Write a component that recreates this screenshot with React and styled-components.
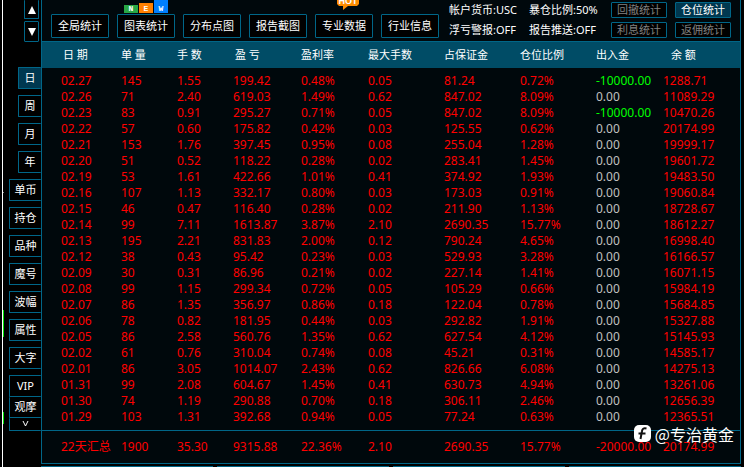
import { useState } from 'react'
import styled, { createGlobalStyle } from 'styled-components'

const columns = [
    { title: '日 期', width: 79, inset: 2 },
    { title: '单 量', width: 56 },
    { title: '手 数', width: 56 },
    { title: '盈 亏', width: 68, inset: 2 },
    { title: '盈利率', width: 67 },
    { title: '最大手数', width: 76 },
    { title: '占保证金', width: 76 },
    { title: '仓位比例', width: 76 },
    { title: '出入金', width: 67 },
    { title: '余 额', width: 77, inset: 8 },
]

const rows = [
    ['02.27', '145', '1.55', '199.42', '0.48%', '0.05', '81.24', '0.72%', '-10000.00', '1288.71'],
    ['02.26', '71', '2.40', '619.03', '1.49%', '0.62', '847.02', '8.09%', '0.00', '11089.29'],
    ['02.23', '83', '0.91', '295.27', '0.71%', '0.05', '847.02', '8.09%', '-10000.00', '10470.26'],
    ['02.22', '57', '0.60', '175.82', '0.42%', '0.03', '125.55', '0.62%', '0.00', '20174.99'],
    ['02.21', '153', '1.76', '397.45', '0.95%', '0.08', '255.04', '1.28%', '0.00', '19999.17'],
    ['02.20', '51', '0.52', '118.22', '0.28%', '0.02', '283.41', '1.45%', '0.00', '19601.72'],
    ['02.19', '53', '1.61', '422.66', '1.01%', '0.41', '374.92', '1.93%', '0.00', '19483.50'],
    ['02.16', '107', '1.13', '332.17', '0.80%', '0.03', '173.03', '0.91%', '0.00', '19060.84'],
    ['02.15', '46', '0.47', '116.40', '0.28%', '0.02', '211.90', '1.13%', '0.00', '18728.67'],
    ['02.14', '99', '7.11', '1613.87', '3.87%', '2.10', '2690.35', '15.77%', '0.00', '18612.27'],
    ['02.13', '195', '2.21', '831.83', '2.00%', '0.12', '790.24', '4.65%', '0.00', '16998.40'],
    ['02.12', '38', '0.43', '95.42', '0.23%', '0.03', '529.93', '3.28%', '0.00', '16166.57'],
    ['02.09', '30', '0.31', '86.96', '0.21%', '0.02', '227.14', '1.41%', '0.00', '16071.15'],
    ['02.08', '99', '1.15', '299.34', '0.72%', '0.05', '105.29', '0.66%', '0.00', '15984.19'],
    ['02.07', '86', '1.35', '356.97', '0.86%', '0.18', '122.04', '0.78%', '0.00', '15684.85'],
    ['02.06', '78', '0.82', '181.95', '0.44%', '0.03', '292.82', '1.91%', '0.00', '15327.88'],
    ['02.05', '86', '2.58', '560.76', '1.35%', '0.62', '627.54', '4.12%', '0.00', '15145.93'],
    ['02.02', '61', '0.76', '310.04', '0.74%', '0.08', '45.21', '0.31%', '0.00', '14585.17'],
    ['02.01', '86', '3.05', '1014.07', '2.43%', '0.62', '826.66', '6.08%', '0.00', '14275.13'],
    ['01.31', '99', '2.08', '604.67', '1.45%', '0.41', '630.73', '4.94%', '0.00', '13261.06'],
    ['01.30', '74', '1.19', '290.88', '0.70%', '0.18', '306.11', '2.46%', '0.00', '12656.39'],
    ['01.29', '103', '1.31', '392.68', '0.94%', '0.05', '77.24', '0.63%', '0.00', '12365.51'],
]

const total = ['22天汇总', '1900', '35.30', '9315.88', '22.36%', '2.10', '2690.35', '15.77%', '-20000.00', '20174.99']

const periods = ['日', '周', '月', '年']
const views = ['单币', '持仓', '品种', '魔号', '波幅', '属性', '大字']
const reports = ['全局统计', '图表统计', '分布点图', '报告截图', '专业数据', '行业信息']
const toggles = ['回撤统计', '仓位统计', '利息统计', '返佣统计']

function cashColor(column, value) {
    if (column !== 8) return '#ff0000'
    return value.startsWith('-') ? '#00ff00' : '#c0c0c0'
}

const App = () => {
    const [period, setPeriod] = useState('日')
    const [toggle, setToggle] = useState('仓位统计')

    return (
        <>
            <GlobalStyle />
            <Page>
                <Sidebar>
                    <ChartEdge width="5" height="467" viewBox="0 0 5 467" aria-hidden="true">
                        <rect x="2" width="1" height="467" fill="#fff" />
                        <rect x="3" y="192" width="1" height="1" fill="#888" />
                        <rect x="3" y="310" width="1" height="27" fill="#00e000" />
                        <rect x="3" y="412" width="1" height="12" fill="#00e000" />
                    </ChartEdge>
                    <Arrows>
                        <ArrowButton aria-label="向上">
                            <svg width="8" height="9" viewBox="0 0 8 9"><path d="M4 1 8 9H0z" fill="#fff" /></svg>
                        </ArrowButton>
                        <ArrowButton aria-label="向下">
                            <svg width="8" height="8" viewBox="0 0 8 8"><path d="M0 0h8L4 8z" fill="#fff" /></svg>
                        </ArrowButton>
                    </Arrows>
                    <Tabs>
                        {periods.map(name => (
                            <Tab key={name} $narrow $active={name === period} onClick={() => setPeriod(name)}>{name}</Tab>
                        ))}
                        {views.map(name => <Tab key={name}>{name}</Tab>)}
                        <TabStack>
                            <Tab>VIP</Tab>
                            <Tab>观摩</Tab>
                            <MoreTab aria-label="更多">
                                <svg width="7" height="6" viewBox="0 0 7 6"><path d="M1 0 3.5 5 6 0" fill="none" stroke="#fff" /></svg>
                            </MoreTab>
                        </TabStack>
                    </Tabs>
                </Sidebar>

                <Main>
                    <Panel>
                        <Toolbar>
                            <Reports>
                                {reports.map(name => (
                                    <ReportItem key={name}>
                                        <ReportButton>{name}</ReportButton>
                                        {name === '图表统计' && (
                                            <NewBadge>
                                                <NewLetter $color="#28a745" $height={8}>N</NewLetter>
                                                <NewLetter $color="#ff8000" $height={10}>E</NewLetter>
                                                <NewLetter $color="#007fff" $height={13}>W</NewLetter>
                                            </NewBadge>
                                        )}
                                        {name === '专业数据' && (
                                            <HotBadge width="22" height="10" viewBox="0 0 22 10">
                                                <path d="M0 0h22v4l-2 2h-9l-5 4V6H2L0 4z" fill="#ff8c00" />
                                                <text x="11" y="4" textAnchor="middle" fill="#fff">HOT</text>
                                            </HotBadge>
                                        )}
                                    </ReportItem>
                                ))}
                            </Reports>
                            <Status>
                                <span>帐户货币:USC</span>
                                <span>暴仓比例:50%</span>
                                <span>浮亏警报:OFF</span>
                                <span>报告推送:OFF</span>
                            </Status>
                            <Toggles>
                                {toggles.map(name => (
                                    <ToggleButton key={name} $active={name === toggle} onClick={() => setToggle(name)}>{name}</ToggleButton>
                                ))}
                            </Toggles>
                        </Toolbar>

                        <Table>
                            <colgroup>
                                {columns.map(column => <Col key={column.title} $width={column.width} />)}
                            </colgroup>
                            <thead>
                                <tr>
                                    {columns.map(column => (
                                        <Th key={column.title} scope="col"><Title $inset={column.inset}>{column.title}</Title></Th>
                                    ))}
                                </tr>
                            </thead>
                            <tbody>
                                {rows.map(row => (
                                    <tr key={row[0]}>
                                        {row.map((value, i) => <Td key={i} $color={cashColor(i, value)}>{value}</Td>)}
                                    </tr>
                                ))}
                            </tbody>
                            <tfoot>
                                <tr>
                                    {total.map((value, i) => <TotalTd key={i}>{value}</TotalTd>)}
                                </tr>
                            </tfoot>
                        </Table>
                        <Watermark>
                            <svg width="17" height="18" viewBox="0 0 17 18" aria-hidden="true">
                                <rect width="17" height="17" rx="5" fill="#fff" />
                                <path d="M12.5 3.5c-3-.8-4.2.4-4.6 3L6.5 14M4.5 8.5h7" fill="none" stroke="#111" strokeWidth="2" />
                            </svg>
                            @专治黄金
                        </Watermark>
                    </Panel>
                    <NextPanels>
                        <div />
                        <div />
                        <div />
                        <div />
                    </NextPanels>
                </Main>
            </Page>
        </>
    )
}

const GlobalStyle = createGlobalStyle`
    * {
        box-sizing: border-box;
    }
    body {
        margin: 0;
        background: #000;
        color: #fff;
        font: 11px/14px "Noto Sans", "Noto Sans CJK SC", sans-serif;
    }
    button {
        padding: 0;
        border: 1px solid #006688;
        border-radius: 1px;
        background: #000;
        color: #fff;
        font: inherit;
        white-space: nowrap;
        cursor: pointer;
    }
`

const Page = styled.main`
    display: flex;
    height: 100vh;
    overflow: hidden;
`

const Sidebar = styled.aside`
    position: relative;
    flex: 0 0 41px;
    display: flex;
    flex-direction: column;
    align-items: flex-end;
    gap: 25px;
`

const ChartEdge = styled.svg`
    position: absolute;
    left: 0;
    top: 0;
`

const Arrows = styled.div`
    display: flex;
    flex-direction: column;
    gap: 2px;
    padding-right: 2px;
`

const ArrowButton = styled.button`
    display: flex;
    align-items: center;
    justify-content: center;
    width: 15px;
    height: 21px;
    &:first-child {
        height: 19px;
        border-top: 0;
    }
`

const Tabs = styled.div`
    display: flex;
    flex-direction: column;
    align-items: flex-end;
    gap: 6px;
`

const Tab = styled.button`
    width: ${({ $narrow }) => ($narrow ? 23 : 32)}px;
    height: 22px;
    border-right: 0;
    background: ${({ $active }) => ($active ? '#003850' : '#000')};
`

const TabStack = styled.div`
    display: flex;
    flex-direction: column;
    & > button + button {
        height: 21px;
        border-top: 0;
    }
    & > button:last-child {
        height: 13px;
    }
`

const MoreTab = styled(Tab)`
    display: flex;
    align-items: center;
    justify-content: center;
`

const Main = styled.section`
    flex: 1;
    min-width: 0;
    padding-right: 3px;
`

const Panel = styled.div`
    position: relative;
    border: 1px solid #006688;
    border-top: 0;
    background: #00080c;
`

const Toolbar = styled.header`
    display: flex;
    align-items: flex-end;
    height: 42px;
    padding: 0 9px 3px;
    border-bottom: 1px solid #006688;
`

const Reports = styled.div`
    display: flex;
    gap: 8px;
`

const ReportItem = styled.div`
    position: relative;
`

const ReportButton = styled.button`
    display: block;
    width: 58px;
    height: 24px;
`

const NewBadge = styled.span`
    position: absolute;
    left: 7px;
    bottom: 25px;
    display: flex;
    align-items: flex-end;
    gap: 1px;
`

const NewLetter = styled.b`
    display: flex;
    align-items: flex-end;
    justify-content: center;
    width: 14px;
    height: ${({ $height }) => $height}px;
    background: ${({ $color }) => $color};
    font: bold 8px/8px "Liberation Mono", monospace;
`

const HotBadge = styled.svg`
    position: absolute;
    left: 22px;
    bottom: 28px;
    font: bold 9px "Liberation Sans", sans-serif;
`

const Status = styled.div`
    align-self: flex-start;
    display: grid;
    grid-template-columns: 80px 82px;
    line-height: 20px;
    margin-left: 10px;
    white-space: nowrap;
`

const Toggles = styled.div`
    display: grid;
    grid-template-columns: 56px 56px;
    gap: 4px 8px;
    margin-left: auto;
`

const ToggleButton = styled.button`
    height: 16px;
    background: ${({ $active }) => ($active ? '#003850' : '#000')};
    color: ${({ $active }) => ($active ? '#fff' : '#808080')};
`

const Table = styled.table`
    width: 100%;
    table-layout: fixed;
    border-spacing: 0;
    font-size: 12px;
    line-height: 16px;
    th,
    td {
        padding: 0;
        text-align: left;
        white-space: nowrap;
    }
    th:first-child,
    td:first-child {
        padding-left: 19px;
    }
    tbody tr:first-child td {
        padding-top: 5px;
    }
    tbody tr:last-child td {
        padding-bottom: 5px;
    }
`

const Col = styled.col`
    width: ${({ $width }) => $width}px;
`

const Th = styled.th`
    height: 26px;
    background: #004c66;
    font-size: 11px;
    font-weight: normal;
`

const Title = styled.span`
    padding-left: ${({ $inset = 0 }) => $inset}px;
`

const Td = styled.td`
    color: ${({ $color }) => $color};
`

const TotalTd = styled.td`
    height: 33px;
    border-top: 1px solid #006688;
    color: #ff0000;
`

const Watermark = styled.div`
    position: absolute;
    right: 6px;
    bottom: 18px;
    display: flex;
    align-items: center;
    gap: 4px;
    font: 16px/22px "Noto Sans CJK SC", sans-serif;
`

const NextPanels = styled.div`
    display: grid;
    grid-template-columns: repeat(4, 1fr);
    gap: 4px;
    padding-top: 2px;
    div {
        height: 20px;
        border: 1px solid #006688;
    }
`

export default App
